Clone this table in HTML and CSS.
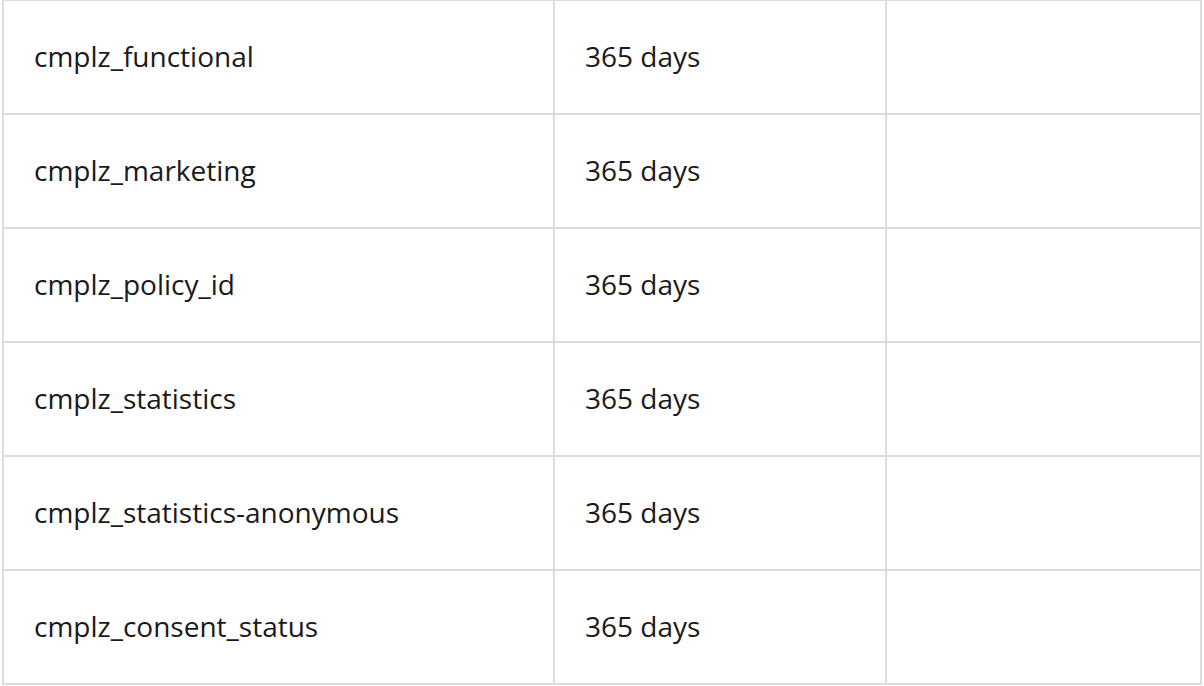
FILE: index.html
```html
<!DOCTYPE html>
<html>
<head>
<meta charset="utf-8">
<link rel="stylesheet" href="styles.css">
</head>
<body>
<table class="cookies">
  <colgroup>
    <col class="c1"><col class="c2"><col class="c3">
  </colgroup>
  <tbody>
    <tr><td>cmplz_functional</td><td>365 days</td><td></td></tr>
    <tr><td>cmplz_marketing</td><td>365 days</td><td></td></tr>
    <tr><td>cmplz_policy_id</td><td>365 days</td><td></td></tr>
    <tr><td>cmplz_statistics</td><td>365 days</td><td></td></tr>
    <tr><td>cmplz_statistics-anonymous</td><td>365 days</td><td></td></tr>
    <tr><td>cmplz_consent_status</td><td>365 days</td><td></td></tr>
  </tbody>
</table>
</body>
</html>
```
FILE: styles.css
```css
html, body {
  margin: 0;
  padding: 0;
  background: #fff;
}
body {
  padding: 0 0 0 2px;
  font-family: "Open Sans", "Noto Sans", sans-serif;
  color: #1a1a1a;
}
.cookies {
  border-collapse: separate;
  border-spacing: 0;
  border-left: 2px solid #dcdcdc;
  border-top: 2px solid #dcdcdc;
  margin-top: -1px;
  table-layout: fixed;
  width: 1200px;
}
.c1 { width: 551px; }
.c2 { width: 332px; }
.c3 { width: 315px; }
.cookies td {
  height: 112px;
  padding: 0 0 0 30px;
  border-right: 2px solid #dcdcdc;
  border-bottom: 2px solid #dcdcdc;
  font-size: 28px;
  line-height: 1.2;
  vertical-align: middle;
  box-sizing: content-box;
}
```
